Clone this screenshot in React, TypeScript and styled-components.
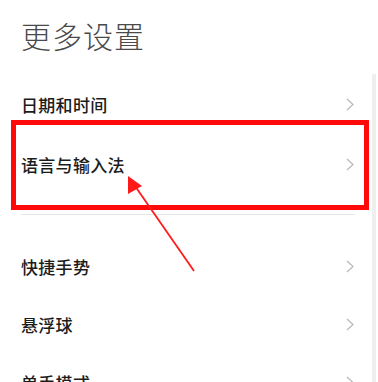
import React from 'react'
import styled, { createGlobalStyle } from 'styled-components'

const GlobalStyle = createGlobalStyle`
  html, body {
    margin: 0;
    padding: 0;
    background: #ffffff;
  }
  body {
    font-family: "Noto Sans CJK SC", "Noto Sans", sans-serif;
  }
`

const Page = styled.div`
  position: relative;
  width: 378px;
  height: 382px;
  overflow: hidden;
  background: #ffffff;
  display: flex;
  flex-direction: column;
`

const Header = styled.div`
  flex-shrink: 0;
  height: 74px;
  padding-left: 21px;
  display: flex;
  align-items: center;
  box-sizing: border-box;
  padding-bottom: 4px;
`

const Title = styled.h1`
  margin: 0;
  font-size: 30px;
  font-weight: 300;
  color: #4a4a4a;
  letter-spacing: 1px;
`

const Body = styled.div`
  flex: 1 0 auto;
  display: flex;
`

const List = styled.div`
  flex: 1;
  display: flex;
  flex-direction: column;
`

const ScrollTrack = styled.div`
  width: 4px;
  margin-right: 2px;
  background: #efefef;
`

const Group = styled.div<{ $top?: number; $bottom?: number; $divider?: boolean }>`
  flex-shrink: 0;
  padding-top: ${({ $top }) => $top || 0}px;
  padding-bottom: ${({ $bottom }) => $bottom || 0}px;
  margin: 0 17px 0 21px;
  border-bottom: ${({ $divider }) => ($divider ? '1px solid #e6e6e6' : 'none')};
`

const Row = styled.div<{ $height: number }>`
  height: ${({ $height }) => $height}px;
  display: flex;
  align-items: center;
  justify-content: space-between;
`

const Label = styled.span`
  font-size: 17px;
  font-weight: 500;
  color: #1c1c1c;
  letter-spacing: 0.3px;
`

const Chevron = styled.svg`
  width: 8px;
  height: 13px;
  margin-right: 1px;
`

const Highlight = styled.div`
  position: absolute;
  left: 11px;
  top: 120px;
  width: 358px;
  height: 90px;
  box-sizing: border-box;
  border: 5px solid #ff0a0a;
  pointer-events: none;
`

const ArrowLayer = styled.svg`
  position: absolute;
  left: 0;
  top: 0;
  width: 378px;
  height: 382px;
  pointer-events: none;
`

const Item = ({ label, height }: { label: string; height: number }) => (
  <Row $height={height}>
    <Label>{label}</Label>
    <Chevron viewBox="0 0 8 13" fill="none">
      <path d="M1 1l6 5.5L1 12" stroke="#b8b8b8" strokeWidth="1.2" />
    </Chevron>
  </Row>
)

export default function App() {
  return (
    <Page>
      <GlobalStyle />
      <Header>
        <Title>更多设置</Title>
      </Header>
      <Body>
        <List>
          <Group $bottom={20} $divider>
            <Item label="日期和时间" height={60} />
            <Item label="语言与输入法" height={60} />
          </Group>
          <Group $top={22}>
            <Item label="快捷手势" height={58} />
            <Item label="悬浮球" height={58} />
            <Item label="单手模式" height={58} />
          </Group>
        </List>
        <ScrollTrack />
      </Body>
      <Highlight />
      <ArrowLayer viewBox="0 0 378 382">
        <line x1="194" y1="271" x2="135" y2="186" stroke="#ff1a1a" strokeWidth="1.8" />
        <polygon points="128,176 128,194 142,186" fill="#ff1a1a" />
      </ArrowLayer>
    </Page>
  )
}
